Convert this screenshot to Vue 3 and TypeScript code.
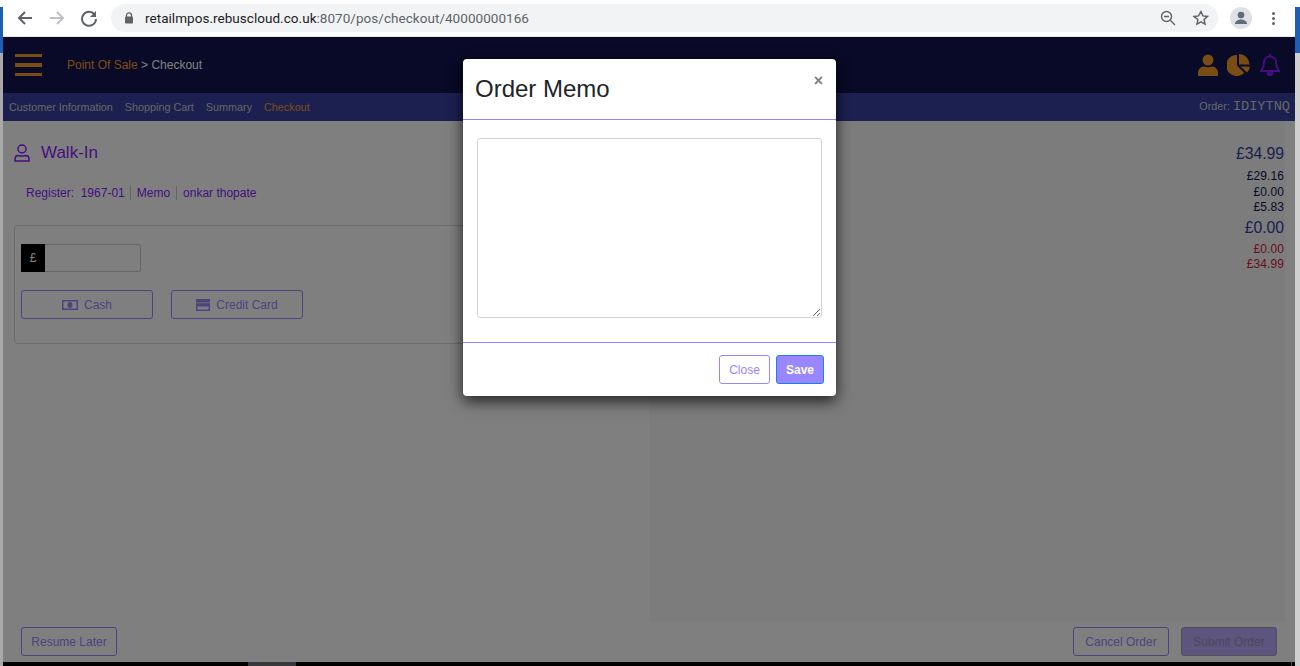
<script setup lang="ts">
const steps = ['Customer Information', 'Shopping Cart', 'Summary']
const totals = [
  { value: '£34.99', cls: 'big' },
  { value: '£29.16', cls: 'dark' },
  { value: '£0.00', cls: 'dark' },
  { value: '£5.83', cls: 'dark' },
  { value: '£0.00', cls: 'big second' },
  { value: '£0.00', cls: 'red' },
  { value: '£34.99', cls: 'red' }
]
</script>

<template>
  <div class="screen">
    <div class="edge edge-left"><i class="edge-top"></i><i class="edge-blue"></i></div>
    <div class="window">
      <div class="chrome">
        <div class="nav-btns">
          <svg width="18" height="18" viewBox="0 0 18 18"><path d="M16 9H3M9 3L3 9l6 6" fill="none" stroke="#5f6368" stroke-width="2"/></svg>
          <svg width="18" height="18" viewBox="0 0 18 18"><path d="M2 9h13M9 3l6 6-6 6" fill="none" stroke="#bdc1c6" stroke-width="2"/></svg>
          <svg width="18" height="18" viewBox="0 0 18 18"><path d="M14.500 5.500A7 7 0 1 0 16 10" fill="none" stroke="#5f6368" stroke-width="2"/><path d="M16 2v6h-6z" fill="#5f6368"/></svg>
        </div>
        <div class="omnibox">
          <svg width="10" height="12" viewBox="0 0 10 12"><path d="M2.500 5V3.400a2.500 2.500 0 0 1 5 0V5" fill="none" stroke="#5f6368" stroke-width="1.300"/><rect x="1" y="4.600" width="8" height="6.800" rx="1" fill="#5f6368"/></svg>
          <span class="url"><span class="host">retailmpos.rebuscloud.co.uk</span>:8070/pos/checkout/40000000166</span>
          <span class="spacer"></span>
          <svg width="16" height="16" viewBox="0 0 16 16" class="zoomout"><circle cx="6.500" cy="6.500" r="5" fill="none" stroke="#5f6368" stroke-width="1.400"/><path d="M10 10l5 5M4 6.500h5" stroke="#5f6368" stroke-width="1.400"/></svg>
          <svg width="16" height="16" viewBox="0 0 24 24"><path d="M12 2.500l2.900 6.300 6.900.8-5.100 4.700 1.400 6.800-6.100-3.400-6.100 3.400 1.400-6.800L1.300 9.600l6.900-.8z" fill="none" stroke="#5f6368" stroke-width="2.200"/></svg>
        </div>
        <div class="avatar">
          <svg width="14" height="14" viewBox="0 0 14 14"><circle cx="7" cy="4" r="3.300" fill="#5f6b7e"/><path d="M1 13c0-3 3-4.500 6-4.500s6 1.500 6 4.500z" fill="#5f6b7e"/></svg>
        </div>
        <div class="dots"><i></i><i></i><i></i></div>
      </div>

      <div class="app">
        <div class="page">
          <header class="top">
            <div class="burger"><i></i><i></i><i></i></div>
            <div class="crumb"><span class="orange">Point Of Sale</span> &gt; Checkout</div>
            <div class="top-icons">
              <svg class="i-user" width="20" height="22" viewBox="0 0 20 22"><circle cx="10" cy="6" r="5.500" fill="#f39a28"/><path d="M0 22v-3c0-4 3-6.500 6-6.500 2.500 1 5.500 1 8 0 3 0 6 2.500 6 6.500v3z" fill="#f39a28"/></svg>
              <svg class="i-pie" width="24" height="22" viewBox="0 0 24 22"><path d="M10 1v10.500l7.200 7.200A10.500 10.500 0 1 1 10 1z" fill="#f39a28"/><path d="M12 0a10.500 10.500 0 0 1 10.500 10.500H12z" fill="#f39a28"/><path d="M13.500 12.500h9.500a10.500 10.500 0 0 1-3 6z" fill="#f39a28"/></svg>
              <svg class="i-bell" width="20" height="22" viewBox="0 0 20 22"><path d="M10 2.500c-3.500 0-6 2.500-6 6 0 5-1.500 6.500-3 8.500h18c-1.500-2-3-3.500-3-8.500 0-3.500-2.500-6-6-6z" fill="none" stroke="#8c1cff" stroke-width="1.900"/><path d="M10 0v3M7.500 19a2.500 2.500 0 0 0 5 0z" stroke="#8c1cff" stroke-width="1.600" fill="#8c1cff"/></svg>
            </div>
          </header>
          <nav class="steps">
            <a v-for="s in steps" :key="s">{{ s }}</a>
            <a class="orange">Checkout</a>
            <span class="spacer"></span>
            <span class="order">Order: <b>IDIYTNQ</b></span>
          </nav>

          <main class="body">
            <section class="left">
              <div class="customer">
                <svg width="16" height="18" viewBox="0 0 16 18"><circle cx="8" cy="5" r="4" fill="none" stroke="#8c1cff" stroke-width="1.500"/><path d="M1 17v-2c0-2.200 1.500-3.500 3.500-3.500 2.300.8 4.700.8 7 0 2 0 3.500 1.300 3.500 3.500v2z" fill="none" stroke="#8c1cff" stroke-width="1.500"/></svg>
                <span>Walk-In</span>
              </div>
              <div class="meta">
                <span class="meta-item">Register:&nbsp; 1967-01</span>
                <span class="meta-item">Memo</span>
                <span class="meta-item">onkar thopate</span>
              </div>
              <div class="pay-card">
                <div class="amount">
                  <span class="cur">£</span>
                  <span class="amount-field"></span>
                </div>
                <div class="pay-btns">
                  <button class="btn pay">
                    <svg width="16" height="10" viewBox="0 0 16 10"><path fill-rule="evenodd" d="M0 0h16v10H0zM1.500 1.500v7h13v-7z" fill="#9a86ff"/><ellipse cx="8" cy="5" rx="2.500" ry="3" fill="#9a86ff"/></svg>
                    Cash
                  </button>
                  <button class="btn pay">
                    <svg width="14" height="12" viewBox="0 0 14 12"><path fill-rule="evenodd" d="M0 0h14v12H0zM1.500 7.500v3h11v-3z" fill="#9a86ff"/><path d="M0 3h14v1.500H0z" fill="#c4c0e0"/></svg>
                    Credit Card
                  </button>
                </div>
              </div>
            </section>
            <section class="right">
              <div v-for="(t, i) in totals" :key="i" class="total" :class="t.cls">{{ t.value }}</div>
            </section>
          </main>

          <footer class="actions">
            <button class="btn">Resume Later</button>
            <span class="spacer"></span>
            <button class="btn">Cancel Order</button>
            <button class="btn solid">Submit Order</button>
          </footer>
        </div>

        <div class="taskbar"><span class="thumb"></span><span class="notch"></span></div>
        <div class="backdrop"></div>

        <div class="modal">
          <div class="modal-head">
            <h2>Order Memo</h2>
            <span class="close-x">×</span>
          </div>
          <div class="modal-body">
            <textarea class="memo"></textarea>
          </div>
          <div class="modal-foot">
            <button class="mbtn outline">Close</button>
            <button class="mbtn fill">Save</button>
          </div>
        </div>
      </div>
    </div>
    <div class="edge edge-right"><i class="edge-top"></i><i class="edge-blue"></i></div>
  </div>
</template>

<style>
html, body { margin: 0; overflow: hidden; background: #fff; }
</style>

<style scoped>
.screen {
  width: 1300px;
  height: 666px;
  display: flex;
  font-family: Arial, "Liberation Sans", sans-serif;
  overflow: hidden;
}
.spacer { flex: 1; }

.edge { flex: none; display: flex; flex-direction: column; }
.edge i { display: block; }
.edge-left { width: 3px; background: #aaa; }
.edge-right { width: 5px; background: #d0d0d0; }
.edge-top { height: 7px; background: #fff; }
.edge-blue { height: 46px; background: #1c5fb4; }

.window {
  width: 1292px;
  flex: none;
  display: flex;
  flex-direction: column;
}

.chrome {
  height: 37px;
  flex: none;
  box-sizing: border-box;
  display: flex;
  align-items: center;
  background: #fff;
  border-bottom: 1px solid #e8e8e8;
}
.nav-btns { display: flex; gap: 14px; width: 104px; padding-left: 13px; box-sizing: border-box; }
.omnibox {
  width: 1107px;
  height: 28px;
  margin-left: 4px;
  border-radius: 14px;
  background: #f1f3f4;
  display: flex;
  align-items: center;
  box-sizing: border-box;
  padding: 0 9px 0 13px;
}
.url { margin-left: 11px; font: 13.5px "Roboto", sans-serif; color: #5f6368; letter-spacing: .04px; }
.host { color: #202124; }
.zoomout { margin-right: 17px; }
.avatar {
  width: 22px;
  height: 22px;
  border-radius: 50%;
  background: #dfe1e5;
  margin-left: 12px;
  display: flex;
  align-items: center;
  justify-content: center;
}
.dots { display: flex; flex-direction: column; gap: 2px; margin-left: 20px; }
.dots i { width: 3px; height: 3px; border-radius: 50%; background: #5f6368; display: block; }

.app {
  position: relative;
  flex: 1;
  min-height: 0;
  display: flex;
  flex-direction: column;
}
.page {
  flex: 1;
  min-height: 0;
  display: flex;
  flex-direction: column;
  background: #fff;
}
.top {
  height: 56px;
  display: flex;
  align-items: center;
  background: #10144f;
  flex: none;
}
.burger { margin-left: 12px; display: flex; flex-direction: column; gap: 6px; width: 27px; }
.burger i { display: block; height: 3.500px; background: #f39a28; }
.crumb { margin-left: 25px; font-size: 12px; color: #fff; margin-top: -1px; }
.orange { color: #f39a28; }
.top-icons { margin-left: auto; display: flex; align-items: center; padding-right: 15px; }
.i-pie { margin-left: 9px; }
.i-bell { margin-left: 9px; }

.steps {
  height: 28px;
  flex: none;
  background: #3840a0;
  display: flex;
  align-items: center;
  padding: 0 5px 0 6px;
  gap: 12px;
  font-size: 10.800px;
  color: #ccc;
}
.order { color: #ccc; font-size: 10.800px; margin-top: -1px; }
.order b { font: 400 13.600px "Liberation Mono", monospace; color: #ccc; }

.body { flex: 1; min-height: 0; display: flex; }
.left { width: 646px; flex: none; box-sizing: border-box; padding: 21px 0 0 11px; }
.customer { display: flex; align-items: center; gap: 11px; font-size: 17px; color: #8c1cff; height: 22px; }
.meta { display: flex; margin-top: 21px; padding-left: 12px; font-size: 12px; color: #8c1cff; height: 16px; align-items: center; }
.meta-item { padding: 0 6px; border-left: 1px solid #ccc; line-height: 14px; }
.meta-item:first-child { border-left: 0; padding-left: 0; padding-right: 5px; }
.pay-card {
  margin-top: 24px;
  width: 640px;
  height: 119px;
  box-sizing: border-box;
  border: 1px solid #d8d8d8;
  border-radius: 4px;
  padding: 18px 6px;
}
.amount { display: flex; height: 28px; width: 120px; }
.cur { width: 24px; background: #000; color: #fff; font-size: 12px; display: flex; align-items: center; justify-content: center; flex: none; }
.amount-field { flex: 1; border: 1px solid #ccc; border-left: 0; border-radius: 0 3px 3px 0; }
.pay-btns { display: flex; gap: 18px; margin-top: 18px; }
.btn {
  height: 29px;
  width: 96px;
  box-sizing: border-box;
  background: transparent;
  border: 1px solid #9a86ff;
  border-radius: 3px;
  color: #9a86ff;
  font: 12px Arial, "Liberation Sans", sans-serif;
  padding: 0;
}
.btn.pay { width: 132px; display: flex; align-items: center; justify-content: center; gap: 6px; }
.btn.solid { background: #bcaaff; color: #9a90c0; margin-left: 12px; border-color: #a0a0b0; }
.right {
  flex: 1;
  background: #f8f8f8;
  box-sizing: border-box;
  padding: 22px 1px 0 0;
  margin-right: 10px;
  text-align: right;
}
.total { font-size: 12px; line-height: 15.500px; letter-spacing: .1px; }
.total.big { font-size: 15.800px; line-height: 22px; color: #3840a0; margin-bottom: 4px; letter-spacing: -.05px; }
.total.second { margin-top: 1px; margin-bottom: 3px; }
.total.dark { color: #10144f; }
.total.red { color: #d81b3c; }

.actions { height: 40px; flex: none; display: flex; align-items: flex-start; padding: 5px 18px 0; box-sizing: border-box; }
.taskbar { height: 4px; flex: none; background: #000; position: relative; }
.thumb { position: absolute; left: 245px; width: 48px; top: 0; bottom: 0; background: #70707a; }
.notch { position: absolute; right: 3px; width: 1px; top: 0; bottom: 0; background: #999; }

.backdrop { position: absolute; inset: 0; background: rgba(0, 0, 0, .5); }

.modal {
  position: absolute;
  left: 460px;
  top: 22px;
  width: 373px;
  height: 337px;
  background: #fff;
  border-radius: 4px;
  box-shadow: 0 5px 15px rgba(0, 0, 0, .75);
  display: flex;
  flex-direction: column;
}
.modal-head { height: 61px; box-sizing: border-box; border-bottom: 1px solid #9381ff; display: flex; padding: 0 12px; flex: none; }
.modal-head h2 { margin: 16px 0 0; font-size: 24px; font-weight: 400; color: #212529; line-height: 28px; }
.close-x { margin-left: auto; margin-top: 12px; margin-right: 1px; font-size: 16px; font-weight: 700; color: #808080; line-height: 20px; }
.modal-body { flex: 1; padding: 18px 14px 0; }
.memo {
  display: block;
  width: 100%;
  height: 180px;
  box-sizing: border-box;
  border: 1px solid #ced4da;
  border-radius: 3px;
  background: #fff;
  outline: 0;
}
.modal-foot {
  height: 54px;
  flex: none;
  border-top: 1px solid #9381ff;
  display: flex;
  justify-content: flex-end;
  align-items: flex-start;
  gap: 6px;
  padding: 12px 12px 0;
  box-sizing: border-box;
}
.mbtn { height: 29px; box-sizing: border-box; border-radius: 3px; font: 12px Arial, "Liberation Sans", sans-serif; padding: 0; }
.outline { width: 51px; background: #fff; border: 1px solid #9a86ff; color: #9a86ff; }
.fill { width: 48px; background: #9a86ff; border: 1px solid #1a7ff0; color: #fff; font-weight: 700; }
</style>
